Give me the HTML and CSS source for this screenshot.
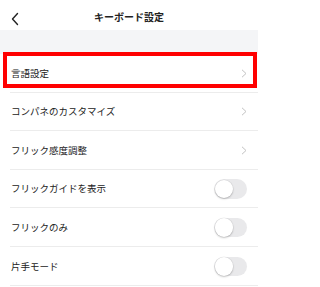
FILE: index.html
```html
<!DOCTYPE html>
<html lang="ja">
<head>
<meta charset="utf-8">
<link rel="stylesheet" href="styles.css">
</head>
<body>
<div class="page">
  <header class="header">
    <svg class="back" width="10" height="14" viewBox="0 0 10 14"><path d="M6.5 1.5 L1.5 7 L6.5 12.5" fill="none" stroke="#222" stroke-width="1.4" stroke-linecap="round" stroke-linejoin="round"/></svg>
    <div class="title">キーボード設定</div>
  </header>
  <div class="gap"></div>
  <ul class="list">
    <li class="row first"><span class="label">言語設定</span><svg class="chev" width="6" height="9" viewBox="0 0 6 9"><path d="M1 0.8 L5 4.5 L1 8.2" fill="none" stroke="#c2c2c2" stroke-width="1"/></svg></li>
    <li class="row"><span class="label">コンパネのカスタマイズ</span><svg class="chev" width="6" height="9" viewBox="0 0 6 9"><path d="M1 0.8 L5 4.5 L1 8.2" fill="none" stroke="#c2c2c2" stroke-width="1"/></svg></li>
    <li class="row"><span class="label">フリック感度調整</span><svg class="chev" width="6" height="9" viewBox="0 0 6 9"><path d="M1 0.8 L5 4.5 L1 8.2" fill="none" stroke="#c2c2c2" stroke-width="1"/></svg></li>
    <li class="row"><span class="label">フリックガイドを表示</span><span class="toggle"><span class="knob"></span></span></li>
    <li class="row"><span class="label">フリックのみ</span><span class="toggle"><span class="knob"></span></span></li>
    <li class="row"><span class="label">片手モード</span><span class="toggle"><span class="knob"></span></span></li>
  </ul>
  <div class="highlight"></div>
</div>
</body>
</html>
```

FILE: styles.css
```css
* { box-sizing: border-box; }
html, body { margin: 0; padding: 0; }
body {
  background: #ffffff;
  font-family: "Noto Sans CJK JP", "Noto Sans", sans-serif;
  color: #222222;
}
.page {
  position: relative;
  width: 258px;
  height: 287px;
  overflow: hidden;
  background: #ffffff;
}
.header {
  height: 30px;
  display: flex;
  align-items: center;
  justify-content: center;
  position: relative;
  background: #ffffff;
}
.back {
  position: absolute;
  left: 10.5px;
  top: 11.5px;
}
.title {
  font-size: 10px;
  font-weight: 700;
  line-height: 1;
  margin-top: 3px;
}
.gap {
  height: 24px;
  background: #f4f5f7;
}
.list {
  list-style: none;
  margin: 0;
  padding: 0 0 0 10px;
  background: #ffffff;
}
.row {
  height: 38.6px;
  display: flex;
  align-items: center;
  justify-content: space-between;
  padding: 1px 10.7px 0 1px;
  border-bottom: 1px solid #ececec;
}
.label {
  font-size: 9.5px;
  line-height: 1;
  color: #222222;
}
.chev { display: block; margin-right: 0.5px; }
.toggle {
  width: 33px;
  height: 19.5px;
  border-radius: 10px;
  background: #e9e9eb;
  position: relative;
  display: block;
}
.knob {
  position: absolute;
  left: 0.5px;
  top: 0.5px;
  width: 18.5px;
  height: 18.5px;
  border-radius: 50%;
  background: #ffffff;
  box-shadow: 0 1px 2px rgba(0,0,0,0.22), 0 0 0 0.5px rgba(0,0,0,0.06);
}
.highlight {
  position: absolute;
  left: 3px;
  top: 52px;
  width: 254px;
  height: 36px;
  border: 4px solid #ff0000;
}
```
